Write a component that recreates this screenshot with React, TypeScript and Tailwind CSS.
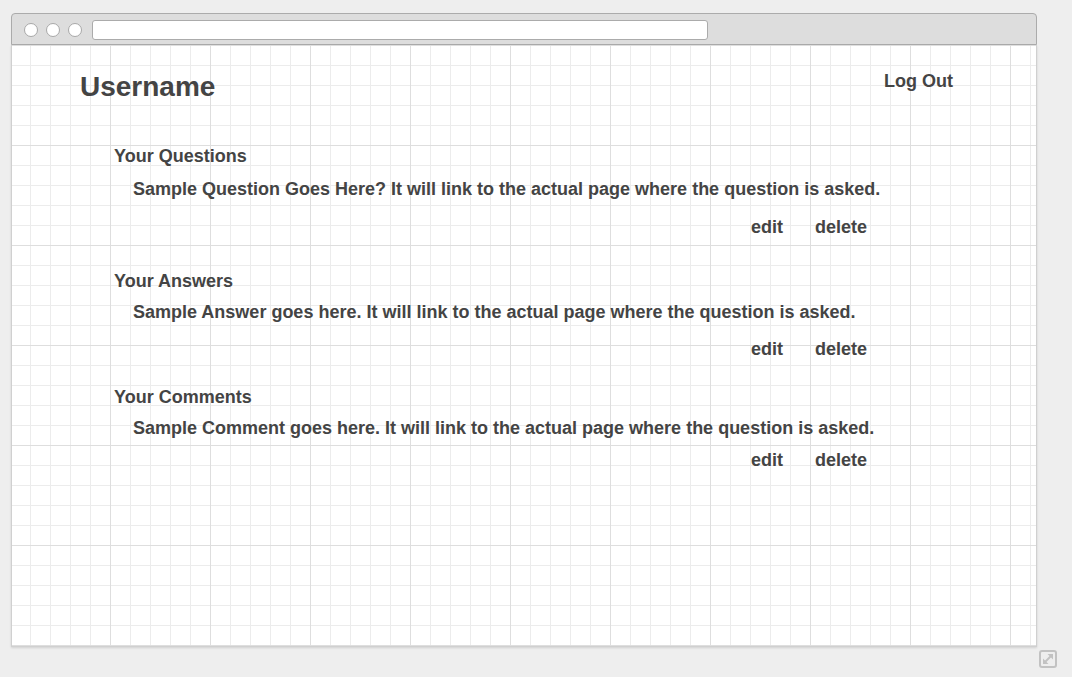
import React from 'react';

interface SectionProps {
  title: string;
  item: string;
  titleGap: string;
  itemGap: string;
}

const Section: React.FC<SectionProps> = ({ title, item, titleGap, itemGap }) => (
  <div className="w-[753px]">
    <h2 className="text-[18px] leading-[20px] font-bold whitespace-nowrap">{title}</h2>
    <p className={`pl-[19px] text-[18px] leading-[20px] font-bold whitespace-nowrap ${titleGap}`}>{item}</p>
    <div className={`flex justify-end gap-[32px] text-[18px] leading-[20px] font-bold ${itemGap}`}>
      <a className="cursor-pointer">edit</a>
      <a className="cursor-pointer">delete</a>
    </div>
  </div>
);

const ResizeIcon = () => (
  <svg width="18" height="18" viewBox="0 0 18 18" fill="none">
    <rect x="1" y="1" width="16" height="16" rx="2" stroke="#c2c2c2" strokeWidth="2" />
    <path d="M5.5 12.5 L12.5 5.5" stroke="#c2c2c2" strokeWidth="2" />
    <path d="M8.5 4 L14 4 L14 9.5 Z" fill="#c2c2c2" />
    <path d="M4 8.5 L4 14 L9.5 14 Z" fill="#c2c2c2" />
  </svg>
);

export default function App() {
  return (
    <div className="w-[1072px] h-[677px] bg-[#eeeeee] pt-[13px] pl-[11px] font-['Liberation_Sans',Arial,sans-serif] text-[#444444] overflow-hidden">
      <div className="flex flex-col w-[1026px]">
        {/* title bar */}
        <div className="h-[32px] bg-[#dddddd] border border-[#ababab] rounded-t-[4px] flex items-center pl-[12px] pt-[1px]">
          <div className="flex gap-[8px]">
            <span className="w-[14px] h-[14px] rounded-full bg-white border border-[#a8a8a8]" />
            <span className="w-[14px] h-[14px] rounded-full bg-white border border-[#a8a8a8]" />
            <span className="w-[14px] h-[14px] rounded-full bg-white border border-[#a8a8a8]" />
          </div>
          <div className="ml-[10px] w-[616px] h-[20px] bg-white border border-[#ababab] rounded-[3px]" />
        </div>

        {/* page canvas */}
        <div className="h-[602px] bg-white border-x border-b border-[#d0d0d0] shadow-[0_1px_2px_rgba(0,0,0,0.12)] [background-image:linear-gradient(to_right,#dedede_1px,transparent_1px),linear-gradient(to_bottom,#dedede_1px,transparent_1px),linear-gradient(to_right,#ececec_1px,transparent_1px),linear-gradient(to_bottom,#ececec_1px,transparent_1px)] [background-size:100px_100px,100px_100px,20px_20px,20px_20px] [background-position:98px_0,0_0,18px_0,0_0]">
          <div className="flex items-start justify-between pt-[26px] pl-[68px] pr-[83px]">
            <h1 className="text-[28px] leading-[32px] font-bold">Username</h1>
            <a className="text-[18px] leading-[20px] font-bold cursor-pointer">Log Out</a>
          </div>

          <div className="flex flex-col pl-[102px] mt-[43px]">
            <Section
              title="Your Questions"
              item="Sample Question Goes Here? It will link to the actual page where the question is asked."
              titleGap="mt-[13px]"
              itemGap="mt-[18px]"
            />
            <div className="mt-[34px]">
              <Section
                title="Your Answers"
                item="Sample Answer goes here. It will link to the actual page where the question is asked."
                titleGap="mt-[11px]"
                itemGap="mt-[17px]"
              />
            </div>
            <div className="mt-[28px]">
              <Section
                title="Your Comments"
                item="Sample Comment goes here. It will link to the actual page where the question is asked."
                titleGap="mt-[11px]"
                itemGap="mt-[12px]"
              />
            </div>
          </div>
        </div>
      </div>
      <div className="flex justify-end w-[1046px] mt-[3px]">
        <ResizeIcon />
      </div>
    </div>
  );
}
